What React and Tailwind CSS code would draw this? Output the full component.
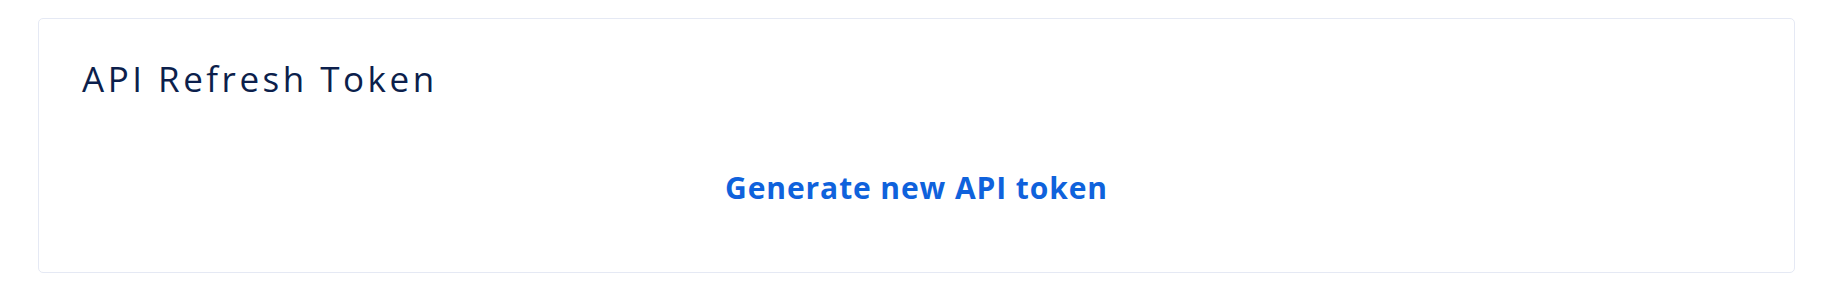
export default function App() {
  return (
    <div className="min-h-screen bg-white pt-[18px] pb-[17px] pl-[38px] pr-[35px]" style={{ fontFamily: '"Open Sans", "Noto Sans", sans-serif' }}>
      {/* Token card */}
      <section className="flex flex-col rounded-[5px] border border-[#e5e9f4] bg-white pt-[40px] pb-[66px]">
        <h2 className="pl-[43px] text-[35px] leading-[40px] font-normal tracking-[0.1em] text-[#0c1f4c]">API Refresh Token</h2>
        <div className="mt-[71px] flex justify-center">
          <button type="button" className="text-[30px] leading-[36px] font-bold tracking-[0.03em] text-[#0f62dc] hover:underline">
            Generate new API token
          </button>
        </div>
      </section>
    </div>
  );
}
